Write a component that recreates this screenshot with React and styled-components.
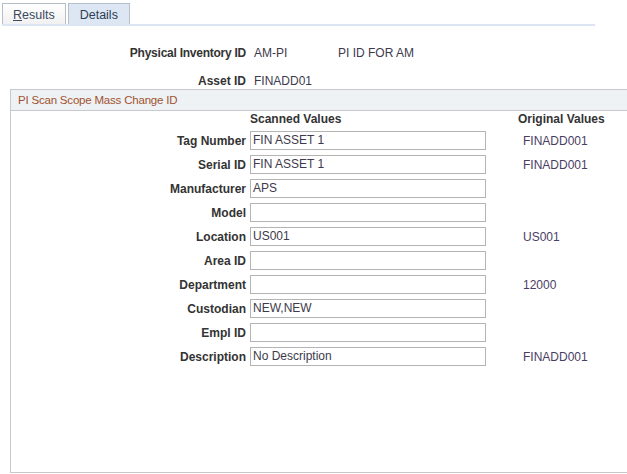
import styled, { createGlobalStyle } from "styled-components";

const GlobalStyle = createGlobalStyle`
  html, body {
    margin: 0;
    padding: 0;
    background: #ffffff;
    overflow: hidden;
  }
  body {
    font-family: Arial, "Liberation Sans", sans-serif;
    font-size: 12px;
    color: #333333;
  }
`;

const fields = [
  { label: "Tag Number", value: "FIN ASSET 1", original: "FINADD001" },
  { label: "Serial ID", value: "FIN ASSET 1", original: "FINADD001" },
  { label: "Manufacturer", value: "APS" },
  { label: "Model", value: "" },
  { label: "Location", value: "US001", original: "US001" },
  { label: "Area ID", value: "" },
  { label: "Department", value: "", original: "12000" },
  { label: "Custodian", value: "NEW,NEW" },
  { label: "Empl ID", value: "" },
  { label: "Description", value: "No Description", original: "FINADD001" }
];

const App = () => {
  return (
    <Page>
      <GlobalStyle />
      <TabBar>
        <Tab>
          <u>R</u>esults
        </Tab>
        <Tab $active>Details</Tab>
      </TabBar>

      <HeaderFields>
        <FieldLabel $tight>Physical Inventory ID</FieldLabel>
        <HeaderValue>AM-PI</HeaderValue>
        <HeaderValue>PI ID FOR AM</HeaderValue>
        <FieldLabel>Asset ID</FieldLabel>
        <HeaderValue>FINADD01</HeaderValue>
        <span />
      </HeaderFields>

      <GroupBox>
        <GroupTitle>PI Scan Scope Mass Change ID</GroupTitle>
        <FieldGrid>
          <span />
          <ColumnHead>Scanned Values</ColumnHead>
          <ColumnHead $indent={28}>Original Values</ColumnHead>
          {fields.map((f) => (
            <Row key={f.label}>
              <FieldLabel>{f.label}</FieldLabel>
              <EditBox>{f.value}</EditBox>
              <Original>{f.original || ""}</Original>
            </Row>
          ))}
        </FieldGrid>
      </GroupBox>
    </Page>
  );
};

export default App;

const Page = styled.div`
  width: 627px;
  height: 474px;
  overflow: hidden;
`;

const TabBar = styled.div`
  display: flex;
  align-items: flex-end;
  gap: 2px;
  width: 593px;
  margin-left: 2px;
  padding-top: 3px;
  border-bottom: 2px solid #dbe5f3;
`;

const Tab = styled.div`
  height: 20px;
  line-height: 22px;
  padding: 0 10px;
  border: 1px solid #b7bdc9;
  border-bottom: none;
  font-size: 12.5px;
  color: ${(p) => (p.$active ? "#2e3d55" : "#3b4a60")};
  background: ${(p) =>
    p.$active ? "#dde6f3" : "linear-gradient(#ffffff, #f1f1f1)"};
  ${(p) => p.$active && "width: 38px; padding: 0 11px;"}
`;

const HeaderFields = styled.div`
  display: grid;
  grid-template-columns: 246px 84px 1fr;
  grid-auto-rows: 16px;
  row-gap: 12px;
  align-items: center;
  margin-top: 19px;
`;

const FieldLabel = styled.div`
  text-align: right;
  font-weight: bold;
  color: #333333;
  white-space: nowrap;
  letter-spacing: ${(p) => (p.$tight ? "-0.25px" : "0")};
`;

const HeaderValue = styled.div`
  padding-left: 8px;
  color: #3d3a4c;
`;

const GroupBox = styled.div`
  margin-left: 10px;
  width: 640px;
  height: 382px;
  border: 1px solid #c8c8cd;
`;

const GroupTitle = styled.div`
  height: 20px;
  line-height: 20px;
  padding-left: 7px;
  background: #eef2f4;
  border-bottom: 1px solid #c8c8cd;
  color: #a2512f;
  font-size: 11.5px;
  letter-spacing: -0.2px;
`;

const FieldGrid = styled.div`
  display: grid;
  grid-template-columns: 235px 236px 1fr;
  column-gap: 4px;
  grid-auto-rows: 19px;
  grid-template-rows: 15px;
  row-gap: 5px;
  align-items: center;
`;

const Row = styled.div`
  display: contents;
`;

const ColumnHead = styled.div`
  font-weight: bold;
  color: #333333;
  padding-left: ${(p) => p.$indent || 0}px;
`;

const EditBox = styled.div`
  box-sizing: border-box;
  height: 19px;
  line-height: 17px;
  padding: 0 2px;
  border: 1px solid #b4b4b4;
  background: #ffffff;
  color: #3d3a4c;
  white-space: nowrap;
  overflow: hidden;
`;

const Original = styled.div`
  padding-left: 33px;
  color: #4a3d64;
`;
